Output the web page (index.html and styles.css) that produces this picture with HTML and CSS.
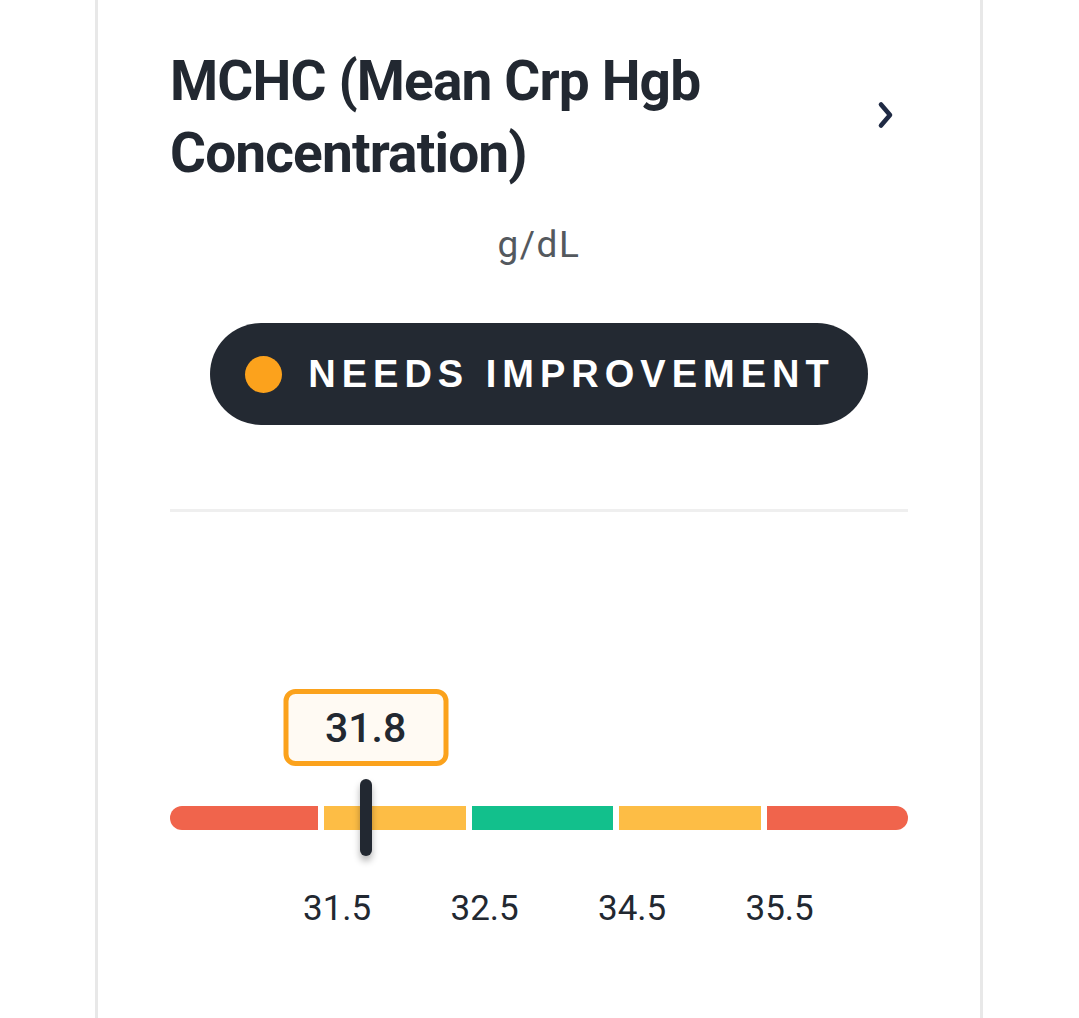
FILE: index.html
```html
<!DOCTYPE html>
<html lang="en">
<head>
<meta charset="utf-8">
<title>MCHC</title>
<link rel="stylesheet" href="styles.css">
</head>
<body>
<div class="card">
  <div class="header">
    <h1 class="title">MCHC (Mean Crp Hgb Concentration)</h1>
    <svg class="chevron" width="18" height="28" viewBox="0 0 18 28" aria-hidden="true">
      <path d="M4 3.5 L13 14 L4 24.5" fill="none" stroke="#1f2a44" stroke-width="4.6" stroke-linecap="round" stroke-linejoin="round"/>
    </svg>
  </div>
  <div class="unit">g/dL</div>
  <div class="status-row">
    <div class="pill"><span class="dot"></span><span class="pill-text">NEEDS IMPROVEMENT</span></div>
  </div>
  <div class="divider"></div>
  <div class="gauge">
    <div class="tip-row">
      <div class="tip" style="left: 26.5%">31.8</div>
    </div>
    <div class="track">
      <div class="seg red first"></div>
      <div class="seg yellow"></div>
      <div class="seg green"></div>
      <div class="seg yellow"></div>
      <div class="seg red last"></div>
      <div class="marker" style="left: 26.5%"></div>
    </div>
    <div class="labels">
      <span class="lbl">31.5</span>
      <span class="lbl">32.5</span>
      <span class="lbl">34.5</span>
      <span class="lbl">35.5</span>
    </div>
  </div>
</div>
</body>
</html>
```
FILE: styles.css
```css
html, body {
  margin: 0;
  padding: 0;
  background: #ffffff;
}
body {
  font-family: Roboto, "Liberation Sans", Arial, sans-serif;
  color: #222831;
  overflow: hidden;
}
.card {
  margin-left: 95px;
  width: 738px;
  padding: 0 72px;
  border-left: 3px solid #e8e8e8;
  border-right: 3px solid #e8e8e8;
  min-height: 1018px;
}
.header {
  display: flex;
  align-items: center;
  justify-content: space-between;
  padding-top: 45px;
}
.title {
  margin: 0;
  font-family: Roboto, "Liberation Sans", Arial, sans-serif;
  font-weight: 700;
  font-size: 55px;
  line-height: 72px;
  letter-spacing: -0.85px;
  color: #222831;
  max-width: 620px;
}
.chevron {
  margin-right: 13px;
  margin-top: -4px;
  flex: none;
}
.unit {
  margin-top: 36px;
  text-align: center;
  font-size: 37px;
  line-height: 40px;
  letter-spacing: 1.5px;
  color: #54595e;
}
.status-row {
  display: flex;
  justify-content: center;
  margin-top: 58px;
}
.pill {
  display: inline-flex;
  align-items: center;
  height: 102px;
  padding: 0 33px 0 35px;
  border-radius: 51px;
  background: #232932;
  box-sizing: border-box;
}
.dot {
  width: 37px;
  height: 37px;
  border-radius: 50%;
  background: #fca21c;
  margin-right: 26px;
}
.pill-text {
  font-family: "Liberation Sans", Arial, sans-serif;
  font-weight: 700;
  font-size: 38px;
  letter-spacing: 6px;
  color: #ffffff;
}
.divider {
  margin-top: 84px;
  height: 3px;
  background: #efefef;
}
.gauge {
  margin-top: 177px;
}
.tip-row {
  position: relative;
  height: 77px;
}
.tip {
  position: absolute;
  top: 0;
  transform: translateX(-50%);
  width: 165px;
  height: 77px;
  box-sizing: border-box;
  border: 5px solid #fba21c;
  border-radius: 12px;
  background: #fffaf3;
  display: flex;
  align-items: center;
  justify-content: center;
  font-weight: 500;
  font-size: 41px;
  color: #222831;
}
.track {
  position: relative;
  margin-top: 40px;
  height: 24px;
  display: flex;
  gap: 6px;
}
.seg {
  flex: 1 1 0;
  height: 24px;
}
.seg.first {
  flex: 0 0 148px;
  border-radius: 12px 0 0 12px;
}
.seg.last { border-radius: 0 12px 12px 0; }
.seg.red { background: #f0644c; }
.seg.yellow { background: #fdbd45; }
.seg.green { background: #12c08c; }
.marker {
  position: absolute;
  top: -27px;
  width: 12px;
  height: 77px;
  margin-left: -6px;
  border-radius: 6px;
  background: #222831;
  box-shadow: 0 5px 7px rgba(0, 0, 0, 0.3);
}
.labels {
  margin-top: 59px;
  padding-left: 133px;
  display: flex;
  font-size: 35px;
  line-height: 40px;
  color: #222831;
}
.lbl {
  width: 147.5px;
}
```
